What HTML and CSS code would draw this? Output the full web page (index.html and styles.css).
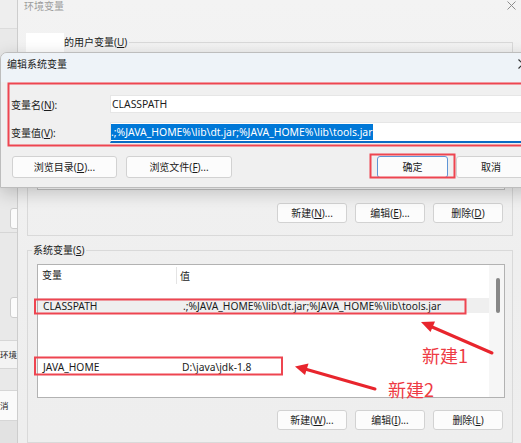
FILE: index.html
```html
<!DOCTYPE html>
<html lang="zh-CN">
<head>
<meta charset="utf-8">
<title>环境变量</title>
<link rel="stylesheet" href="styles.css">
</head>
<body>
<div class="desk">
  <div class="back">
    <div class="b-top"></div>
    <div class="b-gap g1"></div>
    <div class="b-btn"></div>
    <div class="b-gap g2"></div>
    <div class="b-line"></div>
    <div class="b-gap g3"></div>
    <div class="b-btn"></div>
    <div class="b-gap g4"></div>
    <div class="b-line"></div>
    <div class="b-text t1">环境</div>
    <div class="b-line"></div>
    <div class="b-gap g5"></div>
    <div class="b-line"></div>
    <div class="b-text t2">消</div>
    <div class="b-line"></div>
    <div class="b-bottom"></div>
  </div>

  <div class="main">
    <div class="mtitle">
      <span class="mtitle-text">环境变量</span>
      <svg class="mclose" width="9" height="9" viewBox="0 0 9 9"><path d="M0.5 0.5L8.5 8.5M8.5 0.5L0.5 8.5" stroke="#8c8c8c" stroke-width="1" fill="none"/></svg>
    </div>

    <fieldset class="group ugroup">
      <legend class="ulegend"><span class="redact"></span>的用户变量(<u>U</u>)</legend>
      <div class="ginner">
        <div class="ulist"></div>
        <div class="btnrow">
          <button class="btn">新建(<u>N</u>)...</button>
          <button class="btn">编辑(<u>E</u>)...</button>
          <button class="btn">删除(<u>D</u>)</button>
        </div>
      </div>
    </fieldset>

    <fieldset class="group sgroup">
      <legend class="slegend">系统变量(<u>S</u>)</legend>
      <div class="ginner">
        <div class="list">
          <div class="lmain">
            <div class="lhead"><span class="hc1">变量</span><span class="hc2">值</span></div>
            <div class="spacer"></div>
            <div class="row hl"><span class="c1">CLASSPATH</span><span class="c2">.;%JAVA_HOME%\lib\dt.jar;%JAVA_HOME%\lib\tools.jar</span></div>
            <div class="row"></div>
            <div class="row"></div>
            <div class="row"></div>
            <div class="row"><span class="c1">JAVA_HOME</span><span class="c2 c2b">D:\java\jdk-1.8</span></div>
          </div>
          <div class="sb"><div class="thumb"></div></div>
        </div>
        <div class="btnrow brow2">
          <button class="btn">新建(<u>W</u>)...</button>
          <button class="btn">编辑(<u>I</u>)...</button>
          <button class="btn">删除(<u>L</u>)</button>
        </div>
      </div>
    </fieldset>
  </div>

  <div class="dialog">
    <div class="dtitle">
      <span>编辑系统变量</span>
      <svg class="dclose" width="10" height="10" viewBox="0 0 10 10"><path d="M0.5 0.5L9.5 9.5M9.5 0.5L0.5 9.5" stroke="#333" stroke-width="1.2" fill="none"/></svg>
    </div>
    <div class="dbody">
      <div class="frow f1"><span class="flabel">变量名(<u>N</u>):</span><div class="field">CLASSPATH</div></div>
      <div class="frow f2"><span class="flabel">变量值(<u>V</u>):</span><div class="field focus"><span class="sel">.;%JAVA_HOME%\lib\dt.jar;%JAVA_HOME%\lib\tools.jar</span></div></div>
      <div class="dbtns">
        <button class="btn dbtn b1">浏览目录(<u>D</u>)...</button>
        <button class="btn dbtn b2">浏览文件(<u>F</u>)...</button>
        <span class="grow"></span>
        <button class="btn dbtn ok">确定</button>
        <button class="btn dbtn cancel">取消</button>
      </div>
    </div>
  </div>

  <svg class="marks" width="521" height="443" viewBox="0 0 521 443">
    <g fill="none" stroke="#ee4550" stroke-width="2">
      <rect x="8.5" y="83.5" width="530" height="62"/>
      <rect x="370.5" y="154.5" width="84" height="23"/>
      <rect x="35" y="299.5" width="430.5" height="14"/>
      <rect x="35" y="357.5" width="247" height="17"/>
    </g>
    <g stroke="#e8252d" stroke-width="3" stroke-linecap="round">
      <line x1="492" y1="353" x2="431" y2="326.5"/>
      <line x1="375" y1="389" x2="305" y2="369"/>
    </g>
    <g fill="#e8252d">
      <polygon points="421,322 435,321.5 430.5,332"/>
      <polygon points="295,366.5 308.5,363.5 305,375"/>
    </g>
  </svg>
  <span class="note n1">新建1</span>
  <span class="note n2">新建2</span>
</div>
</body>
</html>
```

FILE: styles.css
```css
* { box-sizing: border-box; }
html, body { margin: 0; padding: 0; }
body {
  width: 521px;
  height: 443px;
  overflow: hidden;
  background: #ececec;
  font-family: "Noto Sans", "Noto Sans CJK SC", sans-serif;
  font-size: 10px;
  color: #1b1b1b;
}
u { text-decoration: underline; text-underline-offset: 1px; }

.desk {
  position: relative;
  width: 521px;
  height: 443px;
  display: flex;
  overflow: hidden;
}

/* sliver of the window behind */
.back {
  width: 17px;
  flex: none;
  overflow: hidden;
  display: flex;
  flex-direction: column;
  background: #e9e9e9;
}
.b-top { height: 29px; background: #eeeeee; border-bottom: 1px solid #dcdcdc; flex: none; }
.b-gap { flex: none; }
.g1 { height: 179px; }
.g2 { height: 3px; }
.g3 { height: 64px; }
.g4 { height: 22px; }
.g5 { height: 21px; }
.b-btn {
  flex: none;
  height: 21px;
  width: 20px;
  margin-left: 10px;
  background: #fbfbfb;
  border: 1px solid #cdcdcd;
  border-radius: 3px;
}
.b-line { flex: none; height: 1px; background: #d6d6d6; }
.b-text { flex: none; white-space: nowrap; color: #1b1b1b; }
.t1 { height: 27px; line-height: 27px; background: #f3f3f3; font-size: 8.5px; }
.t2 { height: 29px; line-height: 29px; background: #fafafa; font-size: 8.5px; }
.b-bottom { flex: 1; background: #e2e2e2; }

/* main window */
.main {
  flex: 1;
  min-width: 0;
  overflow: hidden;
  border-left: 1px solid #cdcdcd;
  background: linear-gradient(#f3f3f3, #efefef 60%, #eeeeee);
  display: flex;
  flex-direction: column;
}
.mtitle {
  flex: none;
  height: 33px;
  display: flex;
  justify-content: space-between;
  align-items: flex-start;
  padding: 0 5px 0 6px;
  line-height: 12px;
  color: #9d9d9d;
}
.mclose { margin-top: 1px; }

.group {
  margin: 0 8px 0 9px;
  padding: 0;
  border: 1px solid #d9d9d9;
  min-width: 0;
}
.ginner { padding: 0 7px 12px 9px; }

.ulegend {
  padding: 0 2px 0 0;
  margin-left: -2px;
  height: 19px;
  line-height: 19px;
  display: flex;
  align-items: center;
}
.redact { display: inline-block; width: 38px; height: 19px; background: #ffffff; }

.ulist {
  height: 138px;
  background: #ffffff;
  border: 1px solid #c3c3c3;
  border-top: none;
}

.btnrow {
  display: flex;
  justify-content: flex-end;
  gap: 8px;
  margin-top: 13px;
  padding-right: 2px;
}
.btn {
  font-family: inherit;
  font-size: 10px;
  color: #1b1b1b;
  width: 70px;
  height: 20px;
  padding: 0;
  background: #fcfcfc;
  border: 1px solid #d2d2d2;
  border-radius: 3px;
  line-height: 18px;
}

.sgroup { margin-top: 7px; flex: 1; }
.slegend {
  padding: 0 1px;
  margin-left: 4px;
  height: 14px;
  line-height: 14px;
}
.sgroup .ginner { padding-top: 7px; }

.list {
  height: 134px;
  border: 1px solid #b2b2b2;
  background: #ffffff;
  display: flex;
}
.lmain { flex: 1; min-width: 0; }
.lhead { height: 21px; display: flex; align-items: center; }
.hc1 {
  width: 139px;
  padding-left: 4px;
  height: 17px;
  line-height: 17px;
  border-right: 1px solid #e4e4e4;
}
.hc2 { padding-left: 3px; }
.spacer { height: 12px; }
.row {
  height: 15.25px;
  display: flex;
  align-items: center;
  white-space: nowrap;
  font-size: 10.25px;
}
.row.hl { background: #efefef; }
.c1 { width: 139px; padding-left: 5px; flex: none; }
.c2 { padding-left: 6px; }
.c2b { padding-left: 5px; }
.sb { width: 15px; flex: none; background: #f6f6f6; }
.thumb {
  width: 4px;
  height: 35px;
  margin: 13px 0 0 7px;
  background: #878787;
  border-radius: 2px;
}
.brow2 { margin-top: 12px; }

/* edit dialog on top */
.dialog {
  position: absolute;
  left: 0;
  top: 52px;
  width: 538px;
  height: 136px;
  border: 1px solid #bdbdbd;
  border-radius: 7px 7px 0 0;
  background: #f0f0f0;
  box-shadow: 0 5px 18px rgba(0, 0, 0, 0.2);
  display: flex;
  flex-direction: column;
  overflow: hidden;
}
.dtitle {
  flex: none;
  height: 29px;
  background: #eef3f8;
  display: flex;
  justify-content: space-between;
  align-items: flex-start;
  padding: 5px 9px 0 6px;
  line-height: 12px;
}
.dclose { margin-top: 1px; }
.dbody { padding: 13px 10px 0 10px; }
.frow { display: flex; align-items: center; }
.f1 { height: 18px; margin-bottom: 9px; }
.f2 { height: 21px; }
.flabel { width: 99px; flex: none; }
.field {
  flex: 1;
  height: 100%;
  background: #ffffff;
  border: 1px solid #e6e6e6;
  padding-left: 1px;
  display: flex;
  align-items: center;
  white-space: nowrap;
  overflow: hidden;
  font-size: 10.4px;
}
.field.focus { border-bottom: 2px solid #0a6cc4; padding-left: 0; }
.sel { background: #0078d7; color: #ffffff; line-height: 16px; padding-right: 1px; }
.dbtns { display: flex; margin-top: 13px; }
.dbtn { height: 22px; line-height: 20px; }
.b1 { width: 105px; margin-left: 1px; }
.b2 { width: 106px; margin-left: 9px; }
.grow { flex: 1; }
.ok { width: 71px; border-color: #5f95d6; }
.cancel { width: 70px; margin-left: 8px; margin-right: 1px; }

/* annotations */
.marks { position: absolute; left: 0; top: 0; pointer-events: none; }
.note {
  position: absolute;
  font-family: "Noto Sans CJK SC", sans-serif;
  font-size: 18px;
  line-height: 20px;
  color: #ee3b44;
  white-space: nowrap;
}
.n1 { left: 422px; top: 345px; }
.n2 { left: 388px; top: 379px; }
```
